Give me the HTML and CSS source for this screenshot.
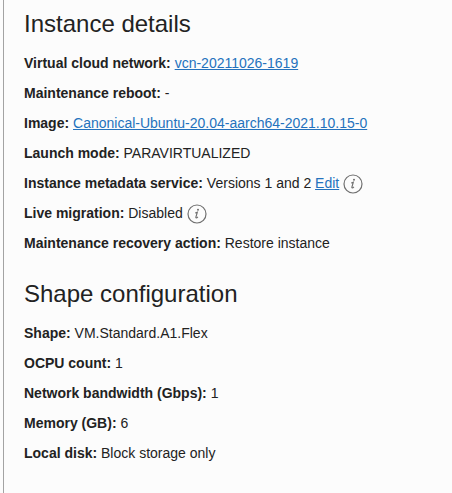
FILE: index.html
```html
<!DOCTYPE html>
<html lang="en">
<head>
    <meta charset="UTF-8">
    <meta name="viewport" content="width=device-width, initial-scale=1.0">
    <title>Instance details</title>
    <link rel="stylesheet" href="styles.css">
</head>
<body>
    <main class="details">
        <section>
            <h2>Instance details</h2>
            <p><strong>Virtual cloud network:</strong> <a href="#">vcn-20211026-1619</a></p>
            <p><strong>Maintenance reboot:</strong> -</p>
            <p><strong>Image:</strong> <a href="#">Canonical-Ubuntu-20.04-aarch64-2021.10.15-0</a></p>
            <p><strong>Launch mode:</strong> PARAVIRTUALIZED</p>
            <p><strong>Instance metadata service:</strong> Versions 1 and 2 <a href="#">Edit</a>
                <svg class="info" viewBox="0 0 20 20"><circle cx="10" cy="10" r="9"/><path d="M8.2 9l2.1-.7-1.4 4.9c-.2 1 .6 1 2-.4"/><circle class="dot" cx="11" cy="5.8" r="1"/></svg></p>
            <p><strong>Live migration:</strong> Disabled
                <svg class="info" viewBox="0 0 20 20"><circle cx="10" cy="10" r="9"/><path d="M8.2 9l2.1-.7-1.4 4.9c-.2 1 .6 1 2-.4"/><circle class="dot" cx="11" cy="5.8" r="1"/></svg></p>
            <p><strong>Maintenance recovery action:</strong> Restore instance</p>
        </section>
        <section>
            <h2>Shape configuration</h2>
            <p><strong>Shape:</strong> VM.Standard.A1.Flex</p>
            <p><strong>OCPU count:</strong> 1</p>
            <p><strong>Network bandwidth (Gbps):</strong> 1</p>
            <p><strong>Memory (GB):</strong> 6</p>
            <p><strong>Local disk:</strong> Block storage only</p>
        </section>
    </main>
</body>
</html>
```
FILE: styles.css
```css
body {
    margin: 0;
    background-color: #fcfcfc;
    color: #222;
    font-family: "Liberation Sans", Arial, sans-serif;
    font-size: 14px;
}

.details {
    box-sizing: border-box;
    min-height: 493px;
    margin-left: 3px;
    padding: 8px 0 0 20px;
    border-left: 1px solid #a3a3a3;
}

h2 {
    margin: 0 0 9px;
    font-size: 24px;
    font-weight: normal;
    line-height: 31px;
}

p {
    height: 30px;
    margin: 0;
    line-height: 30px;
    white-space: nowrap;
}

section + section {
    margin-top: 20px;
}

a {
    color: #2472bd;
    text-decoration: underline;
}

.info {
    width: 20px;
    height: 20px;
    vertical-align: -6px;
    fill: none;
    stroke: #707070;
    stroke-width: 1.2;
}

.info .dot {
    fill: #707070;
    stroke: none;
}
```
